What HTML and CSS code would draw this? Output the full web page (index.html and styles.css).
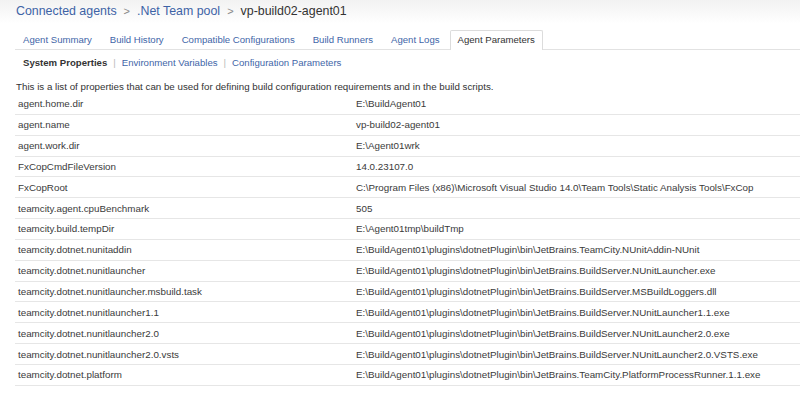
FILE: index.html
```html
<!DOCTYPE html>
<html lang="en">
  <head>
    <meta charset="UTF-8" />
    <title>vp-build02-agent01 - Agent Parameters</title>
    <link rel="stylesheet" href="styles.css">
  </head>
  <body>
    <div class="header">
      <div class="breadcrumb">
        <a href="#">Connected agents</a>
        <span class="arrow">&gt;</span>
        <a href="#">.Net Team pool</a>
        <span class="arrow">&gt;</span>
        <span class="current">vp-build02-agent01</span>
      </div>
    </div>

    <div class="page">
      <ul class="tabs">
        <li><a href="#">Agent Summary</a></li>
        <li><a href="#">Build History</a></li>
        <li><a href="#">Compatible Configurations</a></li>
        <li><a href="#">Build Runners</a></li>
        <li><a href="#">Agent Logs</a></li>
        <li class="active"><span>Agent Parameters</span></li>
      </ul>

      <div class="subTabs">
        <span class="selected">System Properties</span>
        <span class="sep">|</span>
        <a href="#">Environment Variables</a>
        <span class="sep">|</span>
        <a href="#">Configuration Parameters</a>
      </div>

      <p class="note">This is a list of properties that can be used for defining build configuration requirements and in the build scripts.</p>

      <div class="params">
        <div class="row"><span class="name">agent.home.dir</span><span>E:\BuildAgent01</span></div>
        <div class="row"><span class="name">agent.name</span><span>vp-build02-agent01</span></div>
        <div class="row"><span class="name">agent.work.dir</span><span>E:\Agent01wrk</span></div>
        <div class="row"><span class="name">FxCopCmdFileVersion</span><span>14.0.23107.0</span></div>
        <div class="row"><span class="name">FxCopRoot</span><span>C:\Program Files (x86)\Microsoft Visual Studio 14.0\Team Tools\Static Analysis Tools\FxCop</span></div>
        <div class="row"><span class="name">teamcity.agent.cpuBenchmark</span><span>505</span></div>
        <div class="row"><span class="name">teamcity.build.tempDir</span><span>E:\Agent01tmp\buildTmp</span></div>
        <div class="row"><span class="name">teamcity.dotnet.nunitaddin</span><span>E:\BuildAgent01\plugins\dotnetPlugin\bin\JetBrains.TeamCity.NUnitAddin-NUnit</span></div>
        <div class="row"><span class="name">teamcity.dotnet.nunitlauncher</span><span>E:\BuildAgent01\plugins\dotnetPlugin\bin\JetBrains.BuildServer.NUnitLauncher.exe</span></div>
        <div class="row"><span class="name">teamcity.dotnet.nunitlauncher.msbuild.task</span><span>E:\BuildAgent01\plugins\dotnetPlugin\bin\JetBrains.BuildServer.MSBuildLoggers.dll</span></div>
        <div class="row"><span class="name">teamcity.dotnet.nunitlauncher1.1</span><span>E:\BuildAgent01\plugins\dotnetPlugin\bin\JetBrains.BuildServer.NUnitLauncher1.1.exe</span></div>
        <div class="row"><span class="name">teamcity.dotnet.nunitlauncher2.0</span><span>E:\BuildAgent01\plugins\dotnetPlugin\bin\JetBrains.BuildServer.NUnitLauncher2.0.exe</span></div>
        <div class="row"><span class="name">teamcity.dotnet.nunitlauncher2.0.vsts</span><span>E:\BuildAgent01\plugins\dotnetPlugin\bin\JetBrains.BuildServer.NUnitLauncher2.0.VSTS.exe</span></div>
        <div class="row"><span class="name">teamcity.dotnet.platform</span><span>E:\BuildAgent01\plugins\dotnetPlugin\bin\JetBrains.TeamCity.PlatformProcessRunner.1.1.exe</span></div>
      </div>
    </div>
  </body>
</html>
```

FILE: styles.css
```css
body {
  margin: 0;
  font-family: "Liberation Sans", Arial, sans-serif;
  font-size: 9.6px;
  color: #333;
  background: #fff;
}

a {
  color: #3f66a8;
  text-decoration: none;
}

.header {
  height: 24px;
  padding-left: 16px;
  background: linear-gradient(#f2f2f2, #fafafa 60%, #fff);
}

.breadcrumb {
  display: flex;
  align-items: center;
  gap: 6px;
  font-size: 12.4px;
  line-height: 22px;
}

.breadcrumb a {
  color: #3d63a6;
}

.breadcrumb .arrow {
  color: #888;
  font-size: 11px;
  padding: 0 1px;
}

.breadcrumb .current {
  color: #333;
}

.page {
  padding-left: 15px;
}

.tabs {
  display: flex;
  list-style: none;
  margin: 6px 0 0;
  padding: 0;
  border-bottom: 1px solid #e2e2e2;
}

.tabs li {
  padding: 0 7px;
  margin-right: 2px;
  line-height: 18px;
  border: 1px solid transparent;
  border-bottom: none;
}

.tabs li.active {
  color: #333;
  border-color: #dcdcdc;
  background: #fff;
  border-radius: 2px 2px 0 0;
  margin-bottom: -1px;
  padding-bottom: 1px;
}

.subTabs {
  display: flex;
  gap: 6px;
  padding: 6px 0 0 8px;
  line-height: 14px;
}

.subTabs .selected {
  font-weight: bold;
  color: #333;
}

.subTabs .sep {
  color: #bbb;
}

.note {
  margin: 10px 0 0 1px;
  line-height: 14px;
  font-size: 9.75px;
}

.params {
  font-size: 9.8px;
  color: #3a3a3a;
}

.params .row {
  display: grid;
  grid-template-columns: 338px 1fr;
  align-items: center;
  box-sizing: border-box;
  height: 20.85px;
  padding-left: 3px;
  border-bottom: 1px solid #e6e6e6;
  white-space: nowrap;
}
```
